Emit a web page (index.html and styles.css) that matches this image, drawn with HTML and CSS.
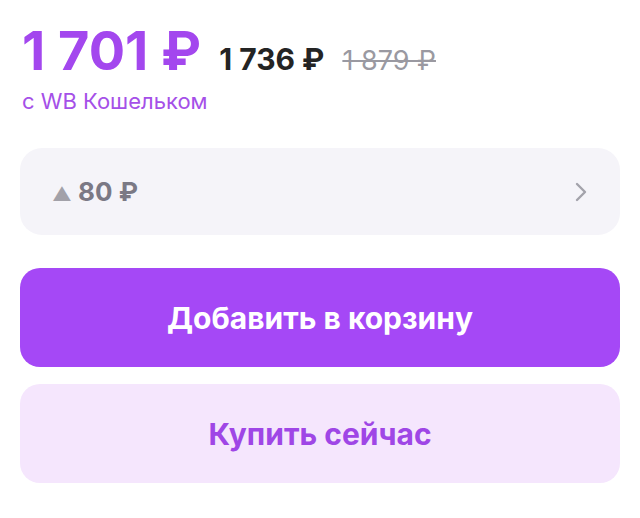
FILE: index.html
```html
<!DOCTYPE html>
<html lang="ru">
<head>
  <meta charset="UTF-8">
  <title>Цена товара</title>
  <link rel="stylesheet" href="styles.css">
</head>
<body>
  <div class="price-block">
    <div class="price-row">
      <span class="price-main">1 701 ₽</span>
      <span class="price-card">1 736 ₽</span>
      <span class="price-old">1 879 ₽</span>
    </div>
    <div class="wallet">с WB Кошельком</div>
  </div>

  <a class="history" href="#">
    <span class="history-value"><span class="arrow">▲</span> 80 ₽</span>
    <svg class="chevron" width="12" height="20" viewBox="0 0 12 20">
      <path d="M2 2 L10 10 L2 18" fill="none" stroke="#a3a2ab" stroke-width="2.4" stroke-linecap="round" stroke-linejoin="round"/>
    </svg>
  </a>

  <button class="btn btn-cart">Добавить в корзину</button>
  <button class="btn btn-buy">Купить сейчас</button>
</body>
</html>
```

FILE: styles.css
```css
body {
  margin: 0;
  padding: 18px 20px 20px;
  background-color: #fff;
  font-family: 'Inter', 'Liberation Sans', sans-serif;
  color: #242424;
}

.price-block {
  padding-left: 2px;
}

.price-row {
  display: flex;
  align-items: baseline;
  gap: 18px;
}

.price-main {
  font-size: 54px;
  font-weight: 700;
  color: #a347ee;
}

.price-card {
  font-size: 30px;
  font-weight: 700;
  color: #242424;
}

.price-old {
  font-size: 27px;
  color: #9a99a1;
  text-decoration: line-through;
  text-decoration-thickness: 2px;
}

.wallet {
  margin-top: 5px;
  font-size: 22px;
  color: #a550e8;
}

.history {
  display: flex;
  justify-content: space-between;
  align-items: center;
  margin-top: 34px;
  height: 87px;
  padding: 0 32px;
  background-color: #f5f4f9;
  border-radius: 22px;
  text-decoration: none;
}

.history-value {
  font-size: 26px;
  font-weight: 700;
  color: #7b7985;
}

.arrow {
  font-size: 19px;
  color: #a2a1a9;
}

.chevron {
  margin-right: 1px;
}

.btn {
  display: block;
  width: 100%;
  height: 99px;
  border: none;
  border-radius: 20px;
  font-family: 'Inter', 'Liberation Sans', sans-serif;
  font-size: 30px;
  font-weight: 700;
  cursor: pointer;
}

.btn-cart {
  margin-top: 33px;
  background-color: #a548f6;
  color: #fff;
}

.btn-buy {
  margin-top: 17px;
  background-color: #f5e6fd;
  color: #9f46e6;
}
```
